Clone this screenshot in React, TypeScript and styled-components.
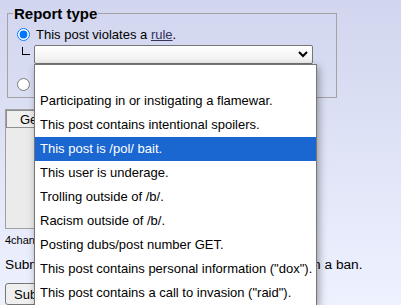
import styled, { createGlobalStyle } from 'styled-components';

const GlobalStyle = createGlobalStyle`
  html, body {
    margin: 0;
    height: 100%;
  }
  body {
    overflow: hidden;
    background: linear-gradient(#d1d5ee, #eef2ff);
    font-family: "Liberation Sans", Arial, sans-serif;
    font-size: 13px;
    color: #000;
  }
`;

const options = [
  '',
  'Participating in or instigating a flamewar.',
  'This post contains intentional spoilers.',
  'This post is /pol/ bait.',
  'This user is underage.',
  'Trolling outside of /b/.',
  'Racism outside of /b/.',
  'Posting dubs/post number GET.',
  'This post contains personal information ("dox").',
  'This post contains a call to invasion ("raid").',
];

const Page = styled.div`
  padding: 5px 5px 0;
`;

const Fieldset = styled.fieldset`
  box-sizing: border-box;
  width: 330px;
  margin: 0 0 0 2px;
  padding: 0 6px 4px 5px;
  border: 1px solid #a3a3a3;
`;

const Legend = styled.legend`
  padding: 0 1px;
  font-size: 15px;
  font-weight: bold;
  line-height: 17px;
`;

const RadioRow = styled.label<{ $top: number }>`
  display: flex;
  align-items: center;
  height: 18px;
  margin-top: ${(p) => p.$top}px;
`;

const Radio = styled.input`
  width: 13px;
  height: 13px;
  margin: 0 6px 0 4px;
`;

const RuleLink = styled.a`
  color: #34345c;
  text-decoration: underline;
`;

const SubRow = styled.div`
  display: flex;
  margin: 2px 0 0 9px;
`;

const Corner = styled.span`
  width: 7px;
  height: 7px;
  margin: 2px 4px 0 0;
  border-left: 1px solid #000;
  border-bottom: 1px solid #000;
`;

const SelectWrap = styled.div`
  position: relative;
`;

const SelectBox = styled.div`
  box-sizing: border-box;
  width: 279px;
  height: 19px;
  display: flex;
  align-items: center;
  justify-content: flex-end;
  padding-right: 4px;
  border: 1px solid #767676;
  border-radius: 2px;
  background: linear-gradient(#ffffff, #efefef);
`;

const Popup = styled.ul`
  position: absolute;
  z-index: 10;
  top: 100%;
  left: 0;
  box-sizing: border-box;
  width: 283px;
  margin: 0;
  padding: 0;
  list-style: none;
  background: #fff;
  border: 1px solid #767676;
  box-shadow: 2px 3px 8px rgba(0, 0, 0, 0.35);
`;

const Option = styled.li<{ $selected?: boolean }>`
  height: 24px;
  line-height: 24px;
  padding-left: 5px;
  white-space: nowrap;
  background: ${(p) => (p.$selected ? '#1a67d2' : 'transparent')};
  color: ${(p) => (p.$selected ? '#fff' : '#000')};
`;

const CaptchaBox = styled.div`
  box-sizing: border-box;
  width: 300px;
  height: 120px;
  margin-top: 11px;
  border: 1px solid #a0a0a0;
  background: #ebebeb;
`;

const Button = styled.button`
  height: 18px;
  padding: 0 12px 0 13px;
  border: 1px solid #8f8f8f;
  border-radius: 0;
  background: #efefef;
  font-family: "Liberation Sans", Arial, sans-serif;
  font-size: 13px;
  color: #000;
`;

const PassNote = styled.div`
  margin-top: 5px;
  font-size: 11px;
  line-height: 13px;
`;

const Warning = styled.div`
  margin-top: 10px;
  font-size: 13.7px;
  line-height: 15px;
  white-space: nowrap;
`;

const SubmitButton = styled.button`
  margin-top: 11px;
  height: 22px;
  padding: 0 8px;
  border: 1px solid #767676;
  border-radius: 3px;
  background: #efefef;
  font-family: "Liberation Sans", Arial, sans-serif;
  font-size: 13px;
  color: #000;
`;

function Chevron() {
  return (
    <svg width="10" height="7" viewBox="0 0 10 7">
      <polyline points="1,1 5,5 9,1" fill="none" stroke="#000" strokeWidth="2" />
    </svg>
  );
}

export default function App() {
  return (
    <>
      <GlobalStyle />
      <Page>
        <Fieldset>
          <Legend>Report type</Legend>
          <RadioRow $top={3}>
            <Radio type="radio" name="cat" defaultChecked />
            <span>
              This post violates a <RuleLink href="#">rule</RuleLink>.
            </span>
          </RadioRow>
          <SubRow>
            <Corner />
            <SelectWrap>
              <SelectBox>
                <Chevron />
              </SelectBox>
              <Popup>
                {options.map((o, i) => (
                  <Option key={i} $selected={i === 3}>
                    {o}
                  </Option>
                ))}
              </Popup>
            </SelectWrap>
          </SubRow>
          <RadioRow $top={11}>
            <Radio type="radio" name="cat" />
            <span>This post violates United States law.</span>
          </RadioRow>
        </Fieldset>
        <CaptchaBox>
          <Button type="button">Get Captcha</Button>
        </CaptchaBox>
        <PassNote>4chan Pass users can bypass this CAPTCHA.</PassNote>
        <Warning>Submitting false or misclassified reports will result in a ban.</Warning>
        <SubmitButton type="button">Submit</SubmitButton>
      </Page>
    </>
  );
}
